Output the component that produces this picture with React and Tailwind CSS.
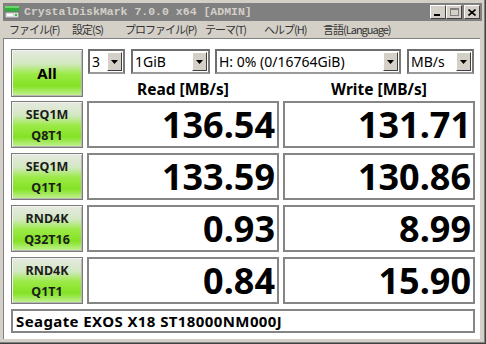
import React from "react"

const sans = "font-['Noto_Sans',sans-serif]"
const greenBtn =
  "bg-[linear-gradient(to_bottom,#e6e9e2_0%,#d2e8c0_30%,#9cea48_52%,#84e224_78%,#c6f29a_100%)] border border-[#7a7a7a] shadow-[inset_1px_1px_0_#f4f4f4,inset_-1px_-1px_0_#b8b8b8]"

function DriveIcon() {
  return (
    <svg width="16" height="16" viewBox="0 0 16 16">
      <rect x="1" y="2" width="14" height="6" fill="#2fae3a" />
      <rect x="1" y="2" width="14" height="2" fill="#6ad66a" />
      <rect x="1" y="8" width="14" height="6" fill="#d8d8d8" stroke="#707070" strokeWidth="1" />
      <rect x="3" y="10" width="6" height="2" fill="#ffffff" />
      <rect x="11" y="10" width="2" height="2" fill="#3cc43c" />
    </svg>
  )
}

function CaptionButton({ children }) {
  return (
    <div className="w-[16px] h-[14px] bg-[#d4d0c8] border border-t-white border-l-white border-r-[#404040] border-b-[#404040] flex items-center justify-center">
      {children}
    </div>
  )
}

function Select({ width, children }) {
  return (
    <div
      className={`${width} h-[25px] flex items-stretch bg-white border-2 border-[#6e6e6e] border-b-[#9a9a9a] border-r-[#7a7a7a]`}
    >
      <div className={`flex-1 flex items-center pl-[2px] text-[14px] text-black ${sans} whitespace-nowrap overflow-hidden`}>
        {children}
      </div>
      <div className="w-[15px] my-[1px] mr-[1px] bg-[#d4d0c8] border border-t-white border-l-white border-r-[#404040] border-b-[#404040] flex items-center justify-center">
        <svg width="7" height="4" viewBox="0 0 7 4">
          <path d="M0 0h7L3.5 4z" fill="#000" />
        </svg>
      </div>
    </div>
  )
}

function Result({ value }) {
  return (
    <div className="w-[192px] h-full bg-white border-2 border-[#858585] flex items-center justify-end pr-[2px]">
      <span className={`${sans} font-bold text-[36px] leading-none text-black`}>{value}</span>
    </div>
  )
}

export default function App() {
  const rows = [
    { a: "SEQ1M", b: "Q8T1", r: "136.54", w: "131.71" },
    { a: "SEQ1M", b: "Q1T1", r: "133.59", w: "130.86" },
    { a: "RND4K", b: "Q32T16", r: "0.93", w: "8.99" },
    { a: "RND4K", b: "Q1T1", r: "0.84", w: "15.90" },
  ]
  const menu = [
    ["ファイル(F)", "w-[63px]"],
    ["設定(S)", "w-[53px]"],
    ["プロファイル(P)", "w-[80px]"],
    ["テーマ(T)", "w-[59px]"],
    ["ヘルプ(H)", "w-[59px]"],
    ["言語(Language)", "w-[90px]"],
  ]

  return (
    <div className="w-[486px] h-[344px] bg-[#d4d0c8] border-r border-b border-[#404040] overflow-hidden">
      <div className="h-full flex flex-col border-r border-b border-[#808080] pl-[3px] pt-[3px] pr-[2px] pb-[2px]">
        {/* title bar */}
        <div className="h-[18px] bg-[#808080] flex items-center pl-[1px] pr-[2px]">
          <DriveIcon />
          <span className="ml-[4px] text-[11.5px] font-bold text-[#d4d0c8] font-['Liberation_Mono',monospace] whitespace-nowrap">
            CrystalDiskMark 7.0.0 x64 [ADMIN]
          </span>
          <div className="ml-auto flex items-center">
            <CaptionButton>
              <div className="w-[6px] h-[2px] bg-black mt-[6px] -ml-[2px]" />
            </CaptionButton>
            <CaptionButton>
              <div className="w-[9px] h-[8px] border border-[#808080] border-t-2" />
            </CaptionButton>
            <div className="w-[2px]" />
            <CaptionButton>
              <svg width="8" height="7" viewBox="0 0 8 7">
                <path d="M0.5 0.5L7.5 6.5M7.5 0.5L0.5 6.5" stroke="#000" strokeWidth="1.6" />
              </svg>
            </CaptionButton>
          </div>
        </div>

        {/* menu bar */}
        <div className="h-[17px] flex items-center pl-[6px] text-[11px] tracking-[-1px] text-[#333] font-['Noto_Sans_CJK_JP',sans-serif] whitespace-nowrap">
          {menu.map(([label, w]) => (
            <span key={label} className={w}>
              {label}
            </span>
          ))}
        </div>

        {/* client area */}
        <div className="flex-1 mr-[2px] mb-[1px] bg-white border-t border-l border-[#808080] pl-[7px] pt-[10px] flex flex-col gap-[5px]">
          <div className="h-[47px] flex gap-[4px]">
            <div className={`w-[72px] h-[48px] ${greenBtn} flex items-center justify-center`}>
              <span className={`${sans} font-bold text-[15px] text-black`}>All</span>
            </div>
            <div className="w-[388px] flex flex-col">
              <div className="flex pl-[1px]">
                <Select width="w-[37px]">3</Select>
                <div className="ml-[6px]">
                  <Select width="w-[79px]">1GiB</Select>
                </div>
                <div className="ml-[5px]">
                  <Select width="w-[186px]">H: 0% (0/16764GiB)</Select>
                </div>
                <div className="ml-[6px]">
                  <Select width="w-[67px]">MB/s</Select>
                </div>
              </div>
              <div className={`flex gap-[4px] mt-[4px] ${sans} font-bold text-[15.5px] text-black`}>
                <div className="w-[192px] text-center">Read [MB/s]</div>
                <div className="w-[192px] text-center">Write [MB/s]</div>
              </div>
            </div>
          </div>

          {rows.map((row) => (
            <div key={row.a + row.b} className="h-[47px] flex gap-[4px]">
              <div className={`w-[72px] h-full ${greenBtn} flex flex-col items-center justify-center`}>
                <span className={`${sans} font-bold text-[12.5px] leading-[21px] text-[#1c1c1c]`}>{row.a}</span>
                <span className={`${sans} font-bold text-[12.5px] leading-[21px] text-[#1c1c1c]`}>{row.b}</span>
              </div>
              <Result value={row.r} />
              <Result value={row.w} />
            </div>
          ))}

          <div className="w-[464px] h-[24px] border-2 border-[#858585] flex items-center pl-[3px]">
            <span className={`${sans} font-bold text-[15px] tracking-[0.4px] text-black whitespace-nowrap`}>
              Seagate EXOS X18 ST18000NM000J
            </span>
          </div>
        </div>
      </div>
    </div>
  )
}
